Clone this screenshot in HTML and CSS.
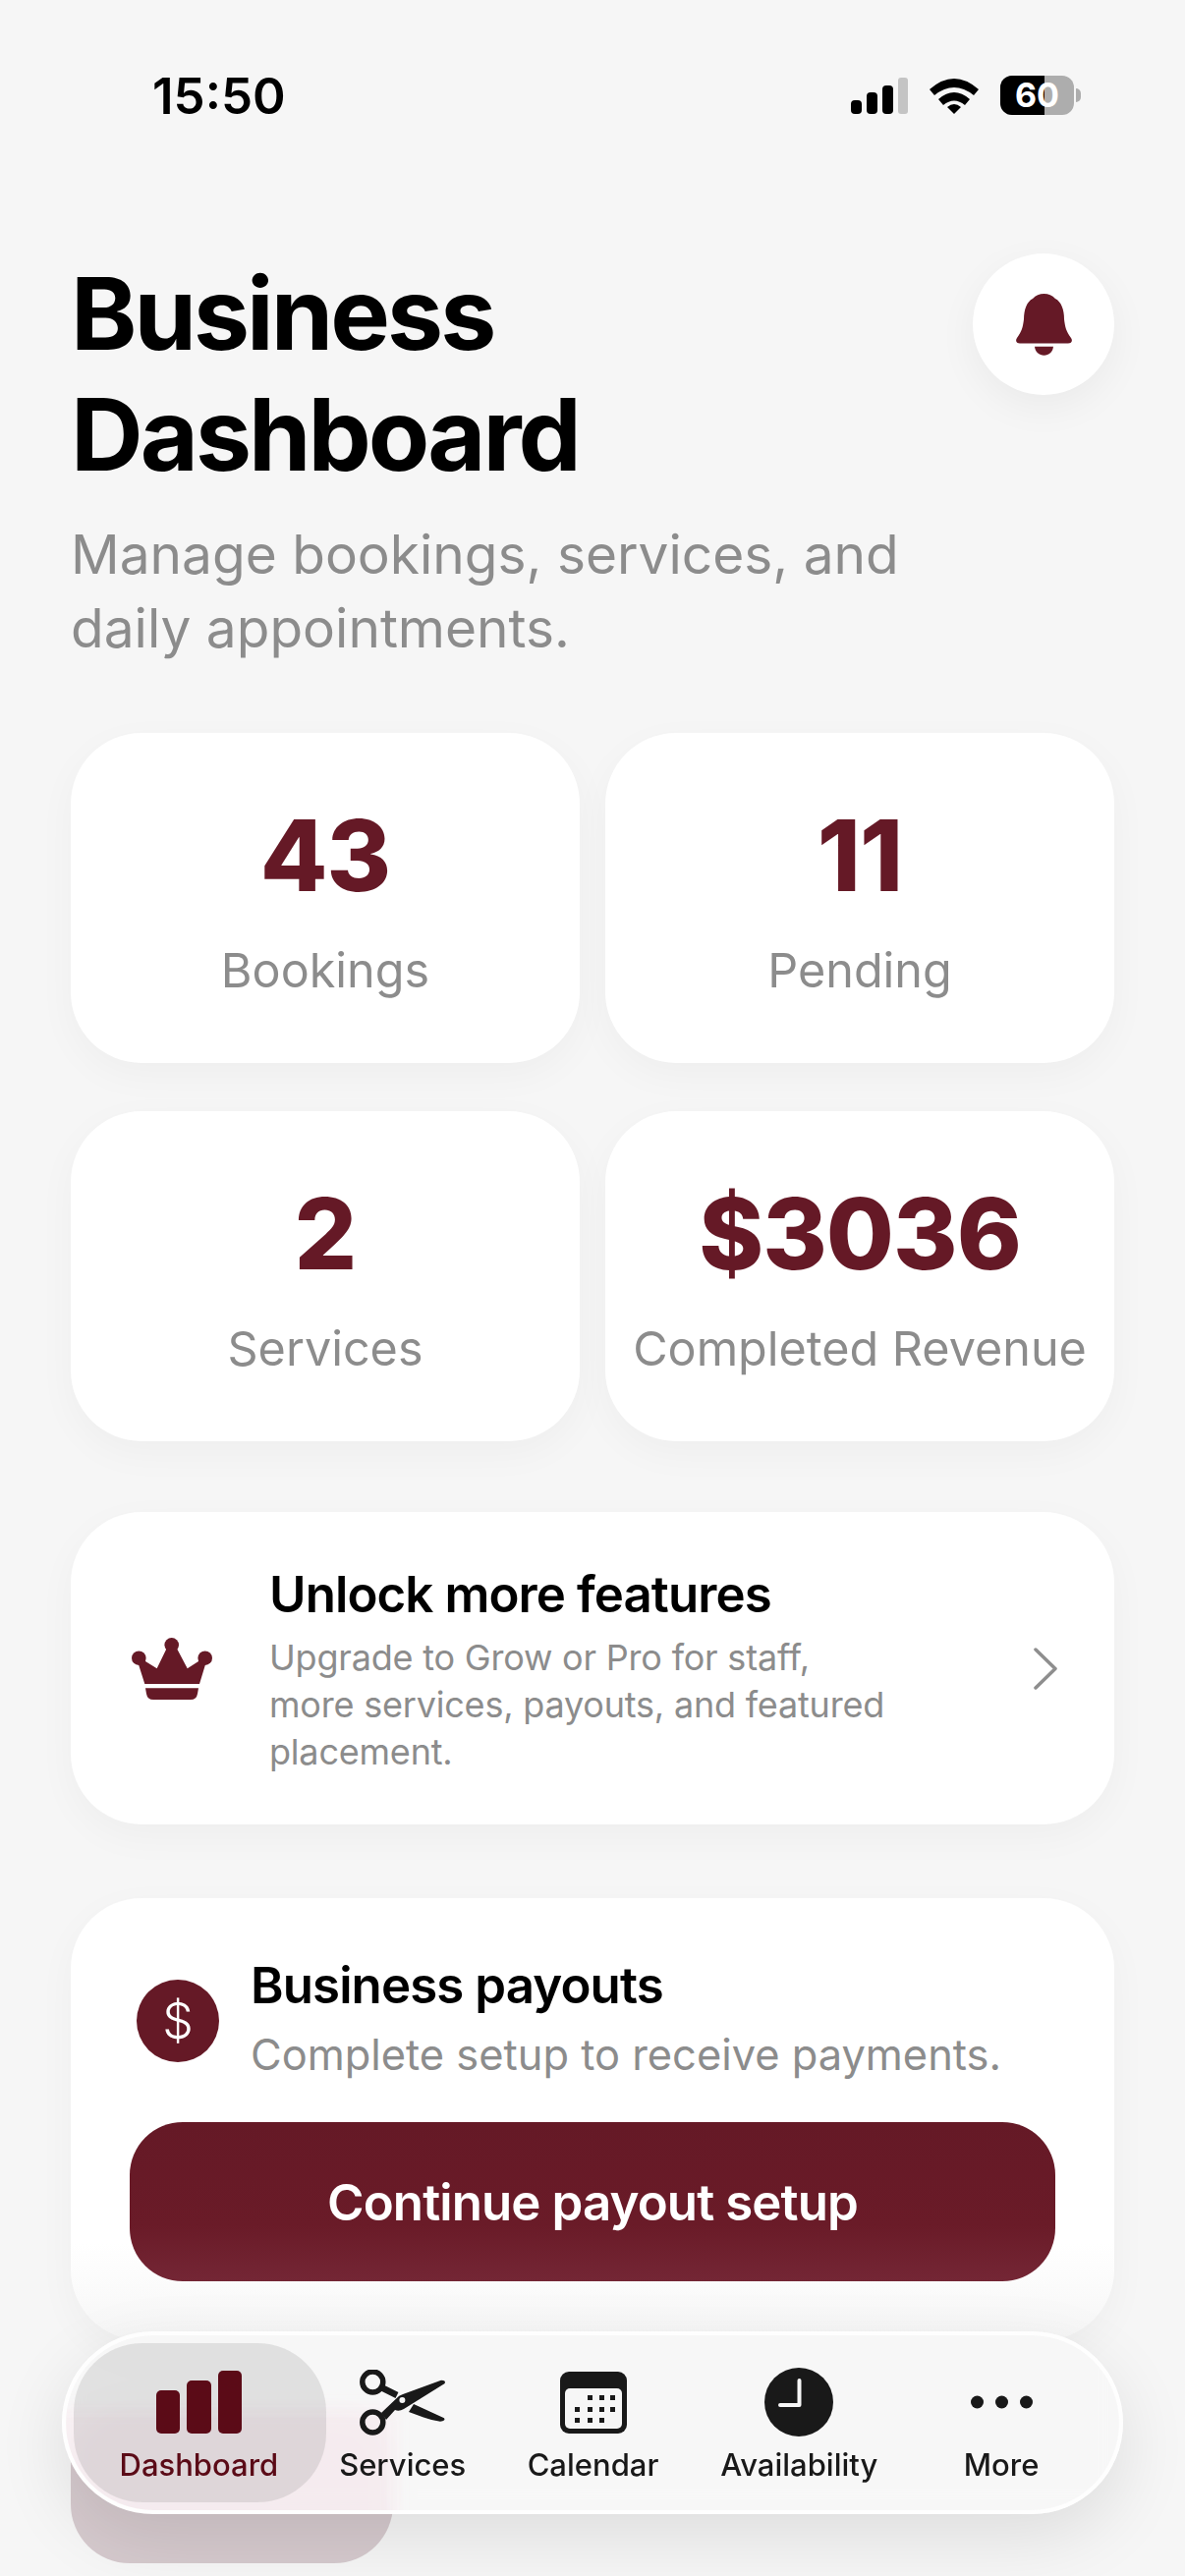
FILE: index.html
```html
<!DOCTYPE html>
<html lang="en">

<head>
    <meta charset="UTF-8">
    <meta name="viewport" content="width=device-width, initial-scale=1.0">
    <link rel="stylesheet" href="styles.css">
    <title>Business Dashboard</title>
</head>

<body>
    <div class="status-bar">
        <span class="time">15:50</span>
        <div class="status-icons">
            <svg class="signal" width="58" height="37" viewBox="0 0 58 37">
                <rect x="0" y="23" width="11" height="14" rx="4" fill="#000"/>
                <rect x="16" y="15" width="11" height="22" rx="4" fill="#000"/>
                <rect x="32" y="8" width="11" height="29" rx="4" fill="#000"/>
                <rect x="48" y="0" width="10" height="37" rx="3" fill="#c4c4c4"/>
            </svg>
            <svg class="wifi" width="50" height="38" viewBox="0 0 50 38">
                <path d="M0 13 Q25 -9 50 13 L45 19 Q25 3 5 19 Z" fill="#000"/>
                <path d="M9 23 Q25 9 41 23 L36 29 Q25 20 14 29 Z" fill="#000"/>
                <path d="M18 31 Q25 25 32 31 L25 38 Z" fill="#000"/>
            </svg>
            <div class="battery">
                <div class="battery-body">
                    <div class="battery-fill"></div>
                    <span class="battery-text">60</span>
                </div>
                <div class="battery-tip"></div>
            </div>
        </div>
    </div>

    <main class="content">
        <div class="header">
            <div class="header-text">
                <h1>Business<br>Dashboard</h1>
                <p class="subtitle">Manage bookings, services, and<br>daily appointments.</p>
            </div>
            <button class="bell-button">
                <svg width="57" height="63" viewBox="0 0 57 63">
                    <path d="M28.500 0 C33 0 37 1.500 40 5 C46 8 49 16 49 26 C50 34 51 38 56 45 C58 48 56.500 50.500 53 50.500 L4 50.500 C0.500 50.500 -1 48 1 45 C6 38 7 34 8 26 C8 16 11 8 17 5 C20 1.500 24 0 28.500 0 Z" fill="#651926"/>
                    <path d="M19 53.700 L38 53.700 C37.500 59 33.500 62.700 28.500 62.700 C23.500 62.700 19.500 59 19 53.700 Z" fill="#651926"/>
                </svg>
            </button>
        </div>

        <div class="stats">
            <div class="stat-card">
                <div class="stat-number">43</div>
                <div class="stat-label">Bookings</div>
            </div>
            <div class="stat-card">
                <div class="stat-number">11</div>
                <div class="stat-label">Pending</div>
            </div>
            <div class="stat-card">
                <div class="stat-number">2</div>
                <div class="stat-label">Services</div>
            </div>
            <div class="stat-card">
                <div class="stat-number">$3036</div>
                <div class="stat-label">Completed Revenue</div>
            </div>
        </div>

        <div class="upgrade-card">
            <svg class="crown" width="82" height="63" viewBox="0 0 82 63">
                <g fill="#651926">
                    <circle cx="7.300" cy="20.700" r="7.300"/>
                    <circle cx="40.700" cy="7.300" r="7.300"/>
                    <circle cx="74.700" cy="20.700" r="7.300"/>
                    <path d="M13.300 47 L6 24 L14 24 L25.700 31.300 L36 10 L45.500 10 L56.700 31.300 L68 24 L76 24 L69 47 Z"/>
                    <path d="M14 51.300 L68 51.300 L67 57 Q66 63 60 63 L22 63 Q16 63 15 57 Z"/>
                </g>
            </svg>
            <div class="upgrade-text">
                <h2>Unlock more features</h2>
                <p>Upgrade to Grow or Pro for staff,<br>more services, payouts, and featured<br>placement.</p>
            </div>
            <svg class="chevron" width="24" height="43" viewBox="0 0 24 43">
                <path d="M2 2 L22 21.500 L2 41" fill="none" stroke="#8e8e8e" stroke-width="3.500" stroke-linecap="round" stroke-linejoin="round"/>
            </svg>
        </div>

        <div class="payout-card">
            <div class="payout-row">
                <div class="payout-icon">$</div>
                <div class="payout-text">
                    <h2>Business payouts</h2>
                    <p>Complete setup to receive payments.</p>
                </div>
            </div>
            <button class="payout-button">Continue payout setup</button>
        </div>
    </main>

    <div class="ghost-button"></div>

    <nav class="tab-bar">
        <div class="tab active">
            <div class="tab-icon">
                <svg width="87" height="64" viewBox="0 0 87 64">
                    <rect x="0" y="20" width="24" height="44" rx="5" fill="#5b0b17"/>
                    <rect x="31" y="10" width="25" height="54" rx="5" fill="#5b0b17"/>
                    <rect x="63" y="0" width="24" height="64" rx="5" fill="#5b0b17"/>
                </svg>
            </div>
            <span>Dashboard</span>
        </div>
        <div class="tab">
            <div class="tab-icon">
                <svg width="88" height="67" viewBox="0 0 88 67">
                    <circle cx="13.300" cy="12.500" r="10.500" fill="none" stroke="#191919" stroke-width="5.500"/>
                    <circle cx="13.300" cy="53.500" r="10.500" fill="none" stroke="#191919" stroke-width="5.500"/>
                    <path d="M22 18 L38 26" fill="none" stroke="#191919" stroke-width="6.500"/>
                    <path d="M22 44 L36.700 30 Q40 26 44 25 L83 10.700 Q88 10.700 86.700 14 L45 40 Q40 43 36 41 L27 51 Z" fill="#191919"/>
                    <path d="M55 35 L86 49.300 Q88 52 82 52.700 Q72 51 65 48.400 L50 43 Z" fill="#191919"/>
                    <circle cx="43.400" cy="31" r="3" fill="#f6f6f6"/>
                </svg>
            </div>
            <span>Services</span>
        </div>
        <div class="tab">
            <div class="tab-icon">
                <svg width="68" height="63" viewBox="0 0 68 63">
                    <rect width="68" height="63" rx="9" fill="#191919"/>
                    <rect x="5" y="17" width="58" height="41" rx="5" fill="#f6f6f6"/>
                    <g fill="#191919">
                        <rect x="28" y="24" width="5" height="5"/>
                        <rect x="40" y="24" width="5" height="5"/>
                        <rect x="51" y="24" width="5" height="5"/>
                        <rect x="15" y="36" width="5" height="5"/>
                        <rect x="28" y="36" width="5" height="5"/>
                        <rect x="40" y="36" width="5" height="5"/>
                        <rect x="51" y="36" width="5" height="5"/>
                        <rect x="15" y="47" width="5" height="5"/>
                        <rect x="28" y="47" width="5" height="5"/>
                        <rect x="40" y="47" width="5" height="5"/>
                    </g>
                </svg>
            </div>
            <span>Calendar</span>
        </div>
        <div class="tab">
            <div class="tab-icon">
                <svg width="70" height="70" viewBox="0 0 70 70">
                    <circle cx="35" cy="35" r="35" fill="#191919"/>
                    <path d="M35.500 13 L35.500 38 L16 38" fill="none" stroke="#f6f6f6" stroke-width="4" stroke-linecap="round" stroke-linejoin="round"/>
                </svg>
            </div>
            <span>Availability</span>
        </div>
        <div class="tab">
            <div class="tab-icon">
                <svg width="63" height="14" viewBox="0 0 63 14">
                    <circle cx="6.500" cy="7" r="6.500" fill="#191919"/>
                    <circle cx="31.500" cy="7" r="6.500" fill="#191919"/>
                    <circle cx="56.500" cy="7" r="6.500" fill="#191919"/>
                </svg>
            </div>
            <span>More</span>
        </div>
    </nav>
</body>

</html>
```

FILE: styles.css
```css
* {
    box-sizing: border-box;
}

html,
body {
    margin: 0;
    padding: 0;
}

body {
    font-family: 'Inter', 'Liberation Sans', sans-serif;
    background-color: #f6f6f6;
    width: 1206px;
    height: 2622px;
    overflow: hidden;
    position: relative;
    color: #000;
}

.status-bar {
    height: 196px;
    padding: 70px 0 0 155px;
    display: flex;
    justify-content: space-between;
    align-items: flex-start;
}

.time {
    font-size: 51px;
    font-weight: 600;
    line-height: 56px;
}

.status-icons {
    display: flex;
    align-items: center;
    gap: 22px;
    margin-right: 106px;
    padding-top: 7px;
}

.battery {
    display: flex;
    align-items: center;
    gap: 2px;
}

.battery-body {
    width: 75px;
    height: 40px;
    border-radius: 12px;
    background-color: #adadad;
    overflow: hidden;
    position: relative;
}

.battery-fill {
    width: 45px;
    height: 40px;
    background-color: #000;
}

.battery-text {
    position: absolute;
    left: 0;
    right: 0;
    top: 0;
    text-align: center;
    font-size: 34px;
    font-weight: 700;
    line-height: 40px;
    color: #fff;
}

.battery-tip {
    width: 5px;
    height: 14px;
    background-color: #adadad;
    border-radius: 0 7px 7px 0;
}

.content {
    padding: 0 72px;
}

.header {
    display: flex;
    justify-content: space-between;
    align-items: flex-start;
    margin-bottom: 69px;
}

h1 {
    font-size: 102px;
    font-weight: 700;
    line-height: 123px;
    letter-spacing: -3px;
    margin: 62px 0 23px;
}

.subtitle {
    font-size: 55px;
    line-height: 75px;
    margin: 0;
    color: #8c8c8c;
}

.bell-button {
    width: 144px;
    height: 144px;
    margin-top: 62px;
    border: none;
    border-radius: 50%;
    background-color: #fff;
    box-shadow: 0 12px 40px rgba(0, 0, 0, 0.05);
    padding: 0;
    display: flex;
    align-items: center;
    justify-content: center;
}

.stats {
    display: grid;
    grid-template-columns: 518px 518px;
    grid-auto-rows: 336px;
    column-gap: 26px;
    row-gap: 49px;
    margin-bottom: 72px;
}

.stat-card {
    background-color: #fff;
    border-radius: 72px;
    box-shadow: 0 12px 40px rgba(0, 0, 0, 0.035);
    display: flex;
    flex-direction: column;
    align-items: center;
    padding-top: 68px;
}

.stat-number {
    font-size: 100px;
    font-weight: 800;
    line-height: 114px;
    letter-spacing: -1px;
    color: #651926;
}

.stat-label {
    font-size: 48.500px;
    line-height: 58px;
    margin-top: 31px;
    color: #8c8c8c;
    white-space: nowrap;
}

.upgrade-card {
    height: 318px;
    background-color: #fff;
    border-radius: 72px;
    box-shadow: 0 12px 40px rgba(0, 0, 0, 0.035);
    display: flex;
    align-items: center;
    padding: 0 58px 0 62px;
    margin-bottom: 75px;
}

.crown {
    margin-right: 58px;
    flex-shrink: 0;
}

.upgrade-text {
    flex: 1;
    padding-top: 3px;
}

.upgrade-text h2,
.payout-text h2 {
    font-size: 51px;
    font-weight: 600;
    line-height: 60px;
    letter-spacing: -0.900px;
    margin: 0;
}

.upgrade-text p {
    font-size: 36px;
    line-height: 48px;
    letter-spacing: -0.200px;
    margin: 10px 0 0;
    color: #8c8c8c;
}

.payout-card {
    height: 450px;
    background: linear-gradient(#fff 78%, #f6f6f6 100%);
    border-radius: 72px;
    box-shadow: 0 12px 40px rgba(0, 0, 0, 0.035);
    padding: 59px 60px 0;
}

.payout-row {
    display: flex;
    align-items: center;
    gap: 32px;
    padding-left: 7px;
    margin-bottom: 41px;
}

.payout-icon {
    width: 84px;
    height: 84px;
    margin-top: 4px;
    border-radius: 50%;
    background-color: #651926;
    color: #fff;
    font-size: 50px;
    font-weight: 300;
    line-height: 84px;
    text-align: center;
    flex-shrink: 0;
}

.payout-text p {
    font-size: 43.400px;
    line-height: 56px;
    margin: 12px 0 0;
    color: #8c8c8c;
}

.payout-button {
    display: block;
    width: 942px;
    height: 162px;
    border: none;
    border-radius: 54px;
    background: linear-gradient(#651926 0%, #6a1b28 65%, #742635 100%);
    color: #fff;
    font-family: inherit;
    font-size: 51px;
    font-weight: 600;
    letter-spacing: -0.900px;
}

/* things under and over the floating tab bar */
.ghost-button {
    position: absolute;
    left: 72px;
    top: 2450px;
    width: 328px;
    height: 159px;
    border-radius: 60px;
    background-color: #d6cace;
}

.tab-bar {
    position: absolute;
    left: 63px;
    top: 2373px;
    width: 1080px;
    height: 186px;
    border-radius: 93px;
    border: 4px solid rgba(255, 255, 255, 0.9);
    background-color: rgba(247, 247, 247, 0.9);
    backdrop-filter: blur(12px);
    box-shadow: 0 24px 70px rgba(0, 0, 0, 0.1);
    display: flex;
    align-items: flex-start;
    padding: 8px;
    overflow: hidden;
}

/* pink glow of the button that scrolled under the bar */
.tab-bar::before {
    content: '';
    position: absolute;
    left: -10px;
    top: 75px;
    width: 345px;
    height: 130px;
    background-color: rgba(250, 170, 195, 0.09);
    filter: blur(8px);
}

.tab {
    display: flex;
    flex-direction: column;
    align-items: center;
    height: 162px;
    position: relative;
    color: #191919;
    font-size: 31px;
    font-weight: 500;
    padding-top: 25px;
    white-space: nowrap;
}

.tab-icon {
    height: 70px;
    display: flex;
    align-items: center;
    margin-bottom: 11px;
}

.tab span {
    line-height: 36px;
}

.tab:nth-child(1) {
    width: 257px;
    padding-right: 2px;
}

.tab:nth-child(2) {
    width: 156px;
}

.tab:nth-child(3) {
    width: 232px;
}

.tab:nth-child(4) {
    width: 188px;
}

.tab:nth-child(5) {
    width: 224px;
}

.tab.active {
    background-color: rgba(0, 0, 0, 0.09);
    border-radius: 70px;
    color: #5b0b17;
}
```
